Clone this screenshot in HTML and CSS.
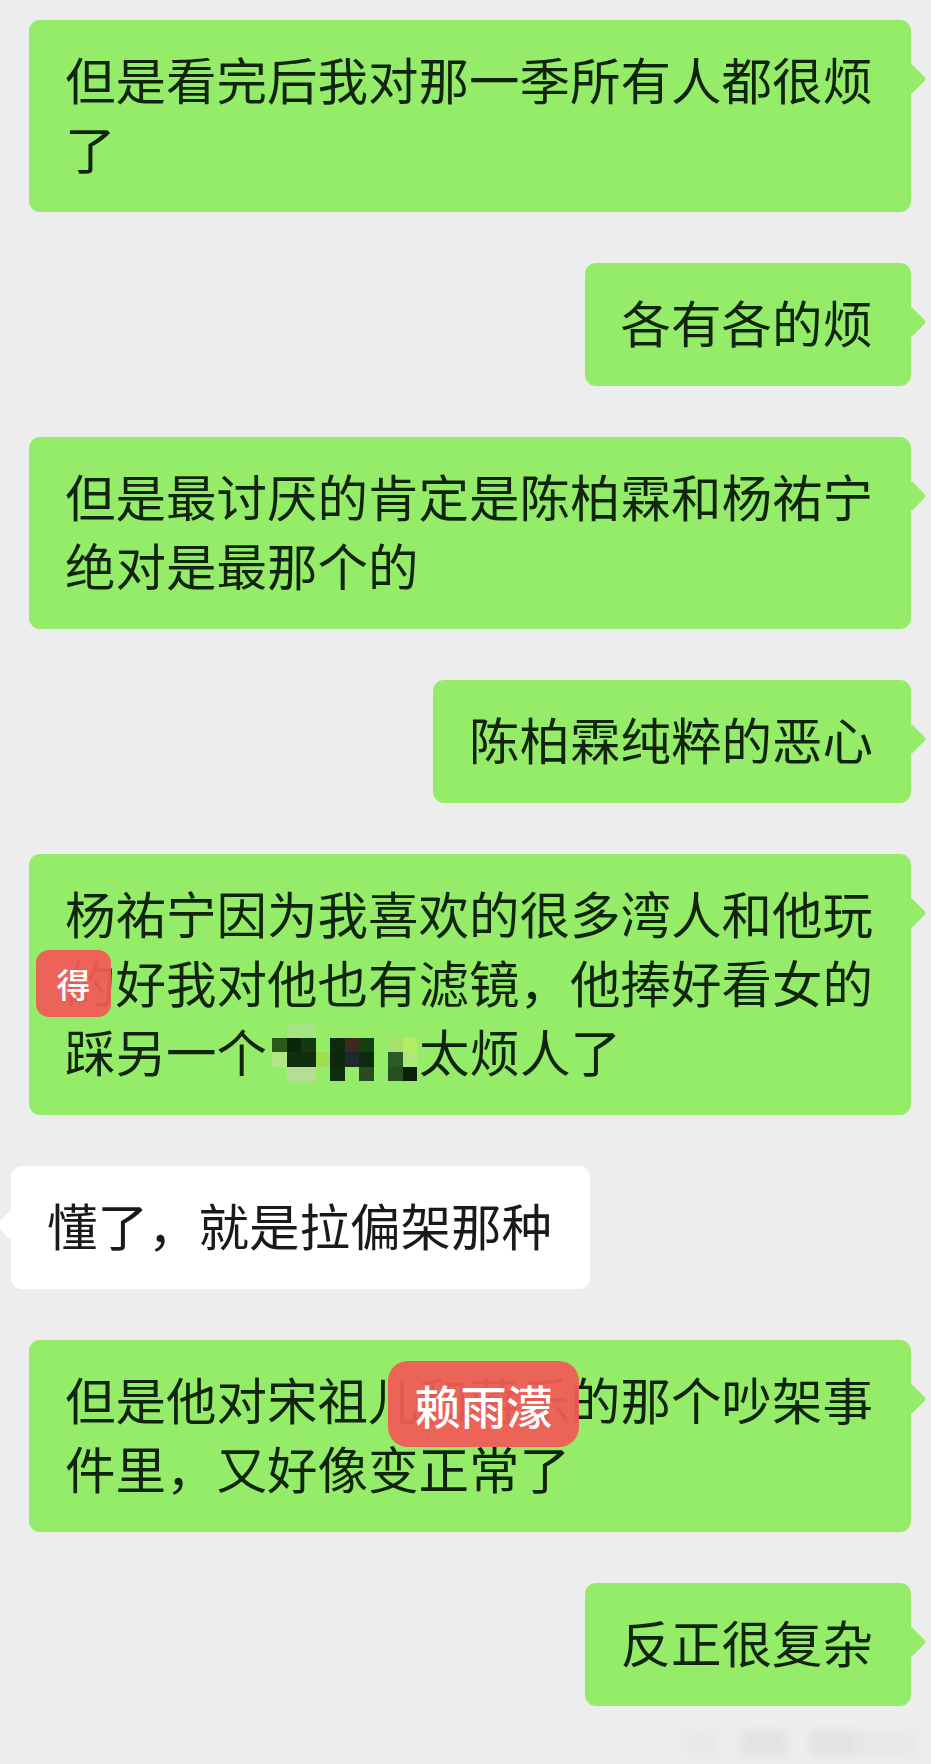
FILE: index.html
```html
<!DOCTYPE html>
<html lang="zh-CN">
<head>
    <meta charset="UTF-8">
    <meta name="viewport" content="width=device-width, initial-scale=1.0">
    <title>聊天记录</title>
    <link rel="stylesheet" href="styles.css">
</head>
<body>

<div class="chat">

    <div class="msg mine">但是看完后我对那一季所有人都很烦了</div>

    <div class="msg mine">各有各的烦</div>

    <div class="msg mine">但是最讨厌的肯定是陈柏霖和杨祐宁绝对是最那个的</div>

    <div class="msg mine">陈柏霖纯粹的恶心</div>

    <div class="msg mine">杨祐宁因为我喜欢的很多湾人和他玩的好我对他也有滤镜，他捧好看女的踩另一个<svg class="mosaic" viewBox="0 0 10 4" shape-rendering="crispEdges" aria-hidden="true">
            <rect x="1" y="0" width="2" height="1" fill="#a6e486"/>
            <rect x="0" y="1" width="1" height="1" fill="#2a5a1a"/>
            <rect x="1" y="1" width="1" height="1" fill="#0c260c"/>
            <rect x="2" y="1" width="1" height="1" fill="#123a10"/>
            <rect x="4" y="1" width="1" height="1" fill="#0e2a0e"/>
            <rect x="5" y="1" width="1" height="1" fill="#3a2a20"/>
            <rect x="6" y="1" width="1" height="1" fill="#124010"/>
            <rect x="8" y="1" width="1" height="1" fill="#a8e070"/>
            <rect x="9" y="1" width="1" height="1" fill="#b0f060"/>
            <rect x="0" y="2" width="1" height="1" fill="#b0e888"/>
            <rect x="1" y="2" width="2" height="1" fill="#0e300e"/>
            <rect x="3" y="2" width="1" height="1" fill="#a0e050"/>
            <rect x="4" y="2" width="1" height="1" fill="#0e280e"/>
            <rect x="5" y="2" width="1" height="1" fill="#1c2a30"/>
            <rect x="6" y="2" width="1" height="1" fill="#0e2a0e"/>
            <rect x="8" y="2" width="1" height="1" fill="#2a5a2a"/>
            <rect x="9" y="2" width="1" height="1" fill="#b0e878"/>
            <rect x="1" y="3" width="2" height="1" fill="#b4de94"/>
            <rect x="4" y="3" width="1" height="1" fill="#0e2e0e"/>
            <rect x="6" y="3" width="1" height="1" fill="#2c4a20"/>
            <rect x="8" y="3" width="1" height="1" fill="#245020"/>
            <rect x="9" y="3" width="1" height="1" fill="#0a200a"/>
        </svg>太烦人了<span class="sticker small">得</span></div>

    <div class="msg other">懂了，就是拉偏架那种</div>

    <div class="msg mine">但是他对宋祖儿和蒋乐的那个吵架事件里，又好像变正常了<span class="sticker big">赖雨濛</span></div>

    <div class="msg mine">反正很复杂</div>

</div>

<div class="watermark" aria-hidden="true">
    <span class="faint"></span><span class="wide"></span><span></span><span class="faint long"></span>
</div>

</body>
</html>
```

FILE: styles.css
```css
body {
    margin: 0;
    min-height: 1764px;
    position: relative;
    background: #ededed;
    font-family: "Noto Sans CJK SC", "Noto Sans", sans-serif;
}

.chat {
    display: flex;
    flex-direction: column;
    align-items: flex-end;
    gap: 51px;
    padding: 20px 20px 0 11px;
}

.msg {
    position: relative;
    box-sizing: border-box;
    max-width: 882px;
    padding: 24px 38px 30px 36px;
    border-radius: 11px;
    font-size: 50.5px;
    line-height: 69px;
    color: #10240e;
}

.msg::after {
    content: "";
    position: absolute;
    top: 48px;
    width: 22px;
    height: 22px;
    border-radius: 3px;
    background: inherit;
    transform: rotate(45deg);
}

.mine {
    background: #95ec69;
}

.mine::after {
    right: -11px;
}

.other {
    align-self: flex-start;
    background: #fff;
    color: #1a1a1a;
}

.other::after {
    left: -11px;
}

.mosaic {
    width: 145px;
    height: 58px;
    margin: 0 2px 0 5px;
    vertical-align: -9px;
}

.sticker {
    position: absolute;
    display: flex;
    align-items: center;
    justify-content: center;
    background: rgba(240, 92, 86, 0.95);
    color: #fff;
    font-weight: 500;
}

.small {
    left: 7px;
    top: 96px;
    width: 75px;
    height: 67px;
    border-radius: 13px;
    font-size: 34px;
}

.big {
    left: 359px;
    top: 21px;
    width: 191px;
    height: 86px;
    border-radius: 20px;
    font-size: 46px;
}

.watermark {
    position: absolute;
    top: 1731px;
    left: 687px;
    display: flex;
    gap: 24px;
    filter: blur(4px);
}

.watermark span {
    width: 44px;
    height: 24px;
    background: #e2e2e2;
}

.watermark .wide {
    width: 46px;
}

.watermark .faint {
    width: 30px;
    background: #e7e7e7;
}

.watermark .long {
    width: 60px;
    margin-left: -24px;
}
```
